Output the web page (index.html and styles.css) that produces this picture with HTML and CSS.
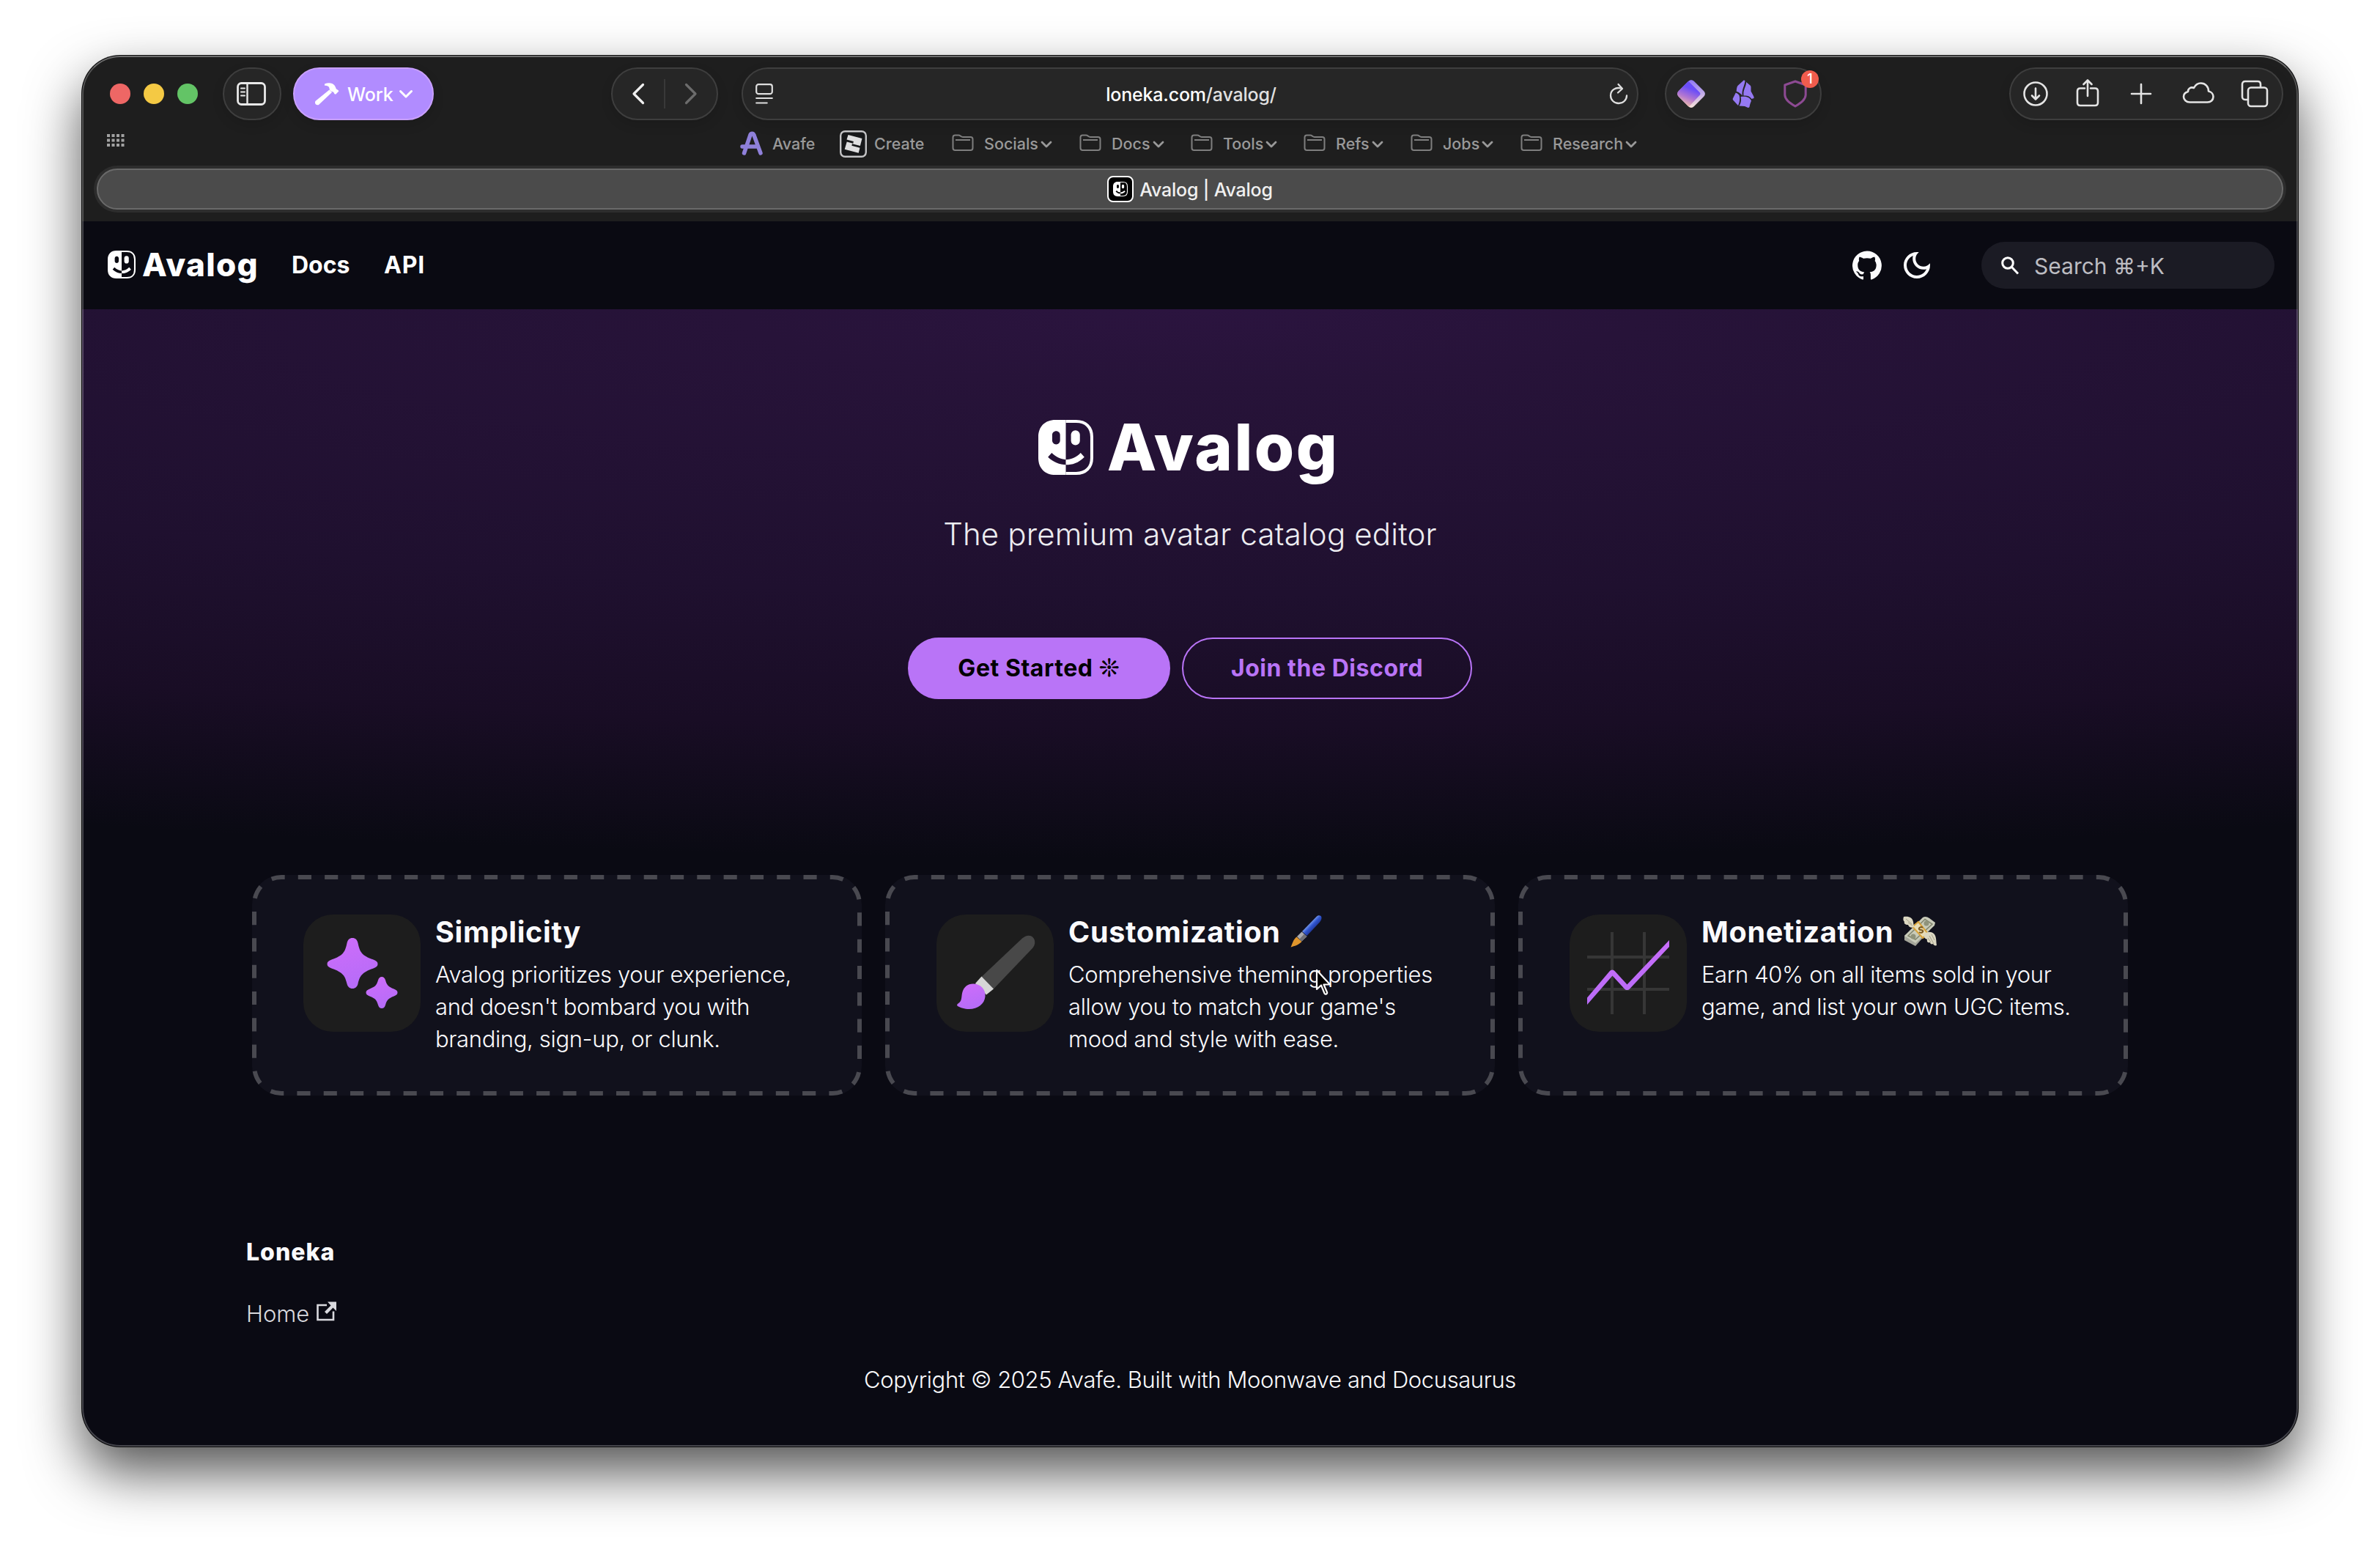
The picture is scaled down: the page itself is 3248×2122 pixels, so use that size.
FILE: index.html
```
<!DOCTYPE html>
<html lang="en">

<head>
  <meta charset="utf-8">
  <title>Avalog | Avalog</title>
  <link rel="stylesheet" href="styles.css">
</head>

<body>
  <!-- shared shapes -->
  <svg class="defs" width="0" height="0">
    <defs>
      <linearGradient id="purple" x1="0" y1="0" x2="0.3" y2="1">
        <stop offset="0" stop-color="#cf6dfa" />
        <stop offset="1" stop-color="#b76cf8" />
      </linearGradient>
      <linearGradient id="gem" x1="0.65" y1="0.1" x2="0.3" y2="1">
        <stop offset="0.2" stop-color="#6a4df8" />
        <stop offset="0.6" stop-color="#b377d0" />
        <stop offset="1" stop-color="#f6c6a4" />
      </linearGradient>
      <linearGradient id="gemEdge" x1="0.5" y1="0" x2="0.5" y2="1">
        <stop offset="0" stop-color="#8f78f5" />
        <stop offset="1" stop-color="#f7e2da" />
      </linearGradient>
      <linearGradient id="handle" x1="0" y1="0" x2="1" y2="1">
        <stop offset="0.35" stop-color="#8fb0f5" />
        <stop offset="0.5" stop-color="#2f55cf" />
        <stop offset="0.7" stop-color="#1b2a80" />
      </linearGradient>
    </defs>
    <symbol id="face" viewBox="0 0 74 74">
      <path fill="currentColor" fill-rule="evenodd" d="M37 0H23C9 0 0 9 0 23v28c0 14 9 23 23 23h14V60.500C29 60 20 57 13 50l5-5.500c6 5.500 12 8.500 19 9zM24 15c3 0 5.300 2.300 5.300 5.300v7.400c0 3-2.300 5.300-5.300 5.300s-5.300-2.300-5.300-5.300v-7.400c0-3 2.300-5.300 5.300-5.300z" />
      <path fill="none" stroke="currentColor" stroke-width="4" d="M37 2h14c13 0 21 8 21 21v28c0 13-8 21-21 21H37" />
      <rect fill="currentColor" x="44" y="14" width="12" height="20" rx="6" />
      <path fill="currentColor" d="M37 53.500c8 0 14-3 20-9l5 5.500c-8 8-16 10.500-25 10.500z" />
    </symbol>
    <symbol id="folder" viewBox="0 0 30 24">
      <path fill="none" stroke="currentColor" stroke-width="2" d="M1.500 19V4.500C1.500 2.500 2.500 1.500 4.500 1.500H9c1.500 0 2 .5 3 1.300 1 .8 1.600 1.200 3 1.200h10.500c2 0 3 1 3 3v12c0 2-1 3-3 3h-21c-2 0-3-1-3-3zM5 8h20" />
    </symbol>
    <symbol id="chevron" viewBox="0 0 16 12">
      <path fill="none" stroke="currentColor" stroke-width="2.800" stroke-linecap="round" stroke-linejoin="round" d="M2 3l6 6 6-6" />
    </symbol>
  </svg>

  <div class="window">
    <div class="chrome">
      <div class="toolbar">
        <div class="lights">
          <span class="light red"></span>
          <span class="light yellow"></span>
          <span class="light green"></span>
        </div>
        <div class="pill sidebar-btn">
          <svg width="40" height="32" viewBox="0 0 40 32" fill="none" stroke="#e9e9e9" stroke-width="2.800">
            <rect x="1.500" y="1.500" width="37" height="29" rx="5" />
            <path d="M14.500 1.500v29" stroke-width="2.400" />
            <path d="M6 8.500h5M6 13.500h5M6 18.500h5" stroke-width="2" stroke-linecap="round" />
          </svg>
        </div>
        <div class="pill work">
          <svg width="34" height="32" viewBox="0 0 34 32" fill="#fff">
            <path d="M20.500 10.500l3.500 3.500L6.500 30.500c-1.500 1.300-3.500 1-4.700-.3s-1.200-3.300.2-4.600z" />
            <path d="M14 2.500C19 .5 24.500.8 27.500 4.500c1.300 1.700 1.600 3.600 2.500 5 .8.900 1.800.8 2.500 1.600l.8 1.300-4.200 4.400-1.500-.6c-.9-.8-.7-1.800-1.500-2.500-1.200-1-2.800-.6-4-1.700-1.700-1.600-1.300-3.300-2.100-5C18.800 5 16.500 4.800 14 4.700z" />
          </svg>
          <span>Work</span>
          <svg width="20" height="13" viewBox="0 0 20 13" fill="none" stroke="#fff" stroke-width="3" stroke-linecap="round" stroke-linejoin="round">
            <path d="M2.500 2.500L10 10l7.500-7.500" />
          </svg>
        </div>
        <div class="pill history">
          <svg width="18" height="30" viewBox="0 0 18 30" fill="none" stroke="#f0f0f0" stroke-width="3.200" stroke-linecap="round" stroke-linejoin="round">
            <path d="M15.500 2.500L3 15l12.500 12.500" />
          </svg>
          <span class="divider"></span>
          <svg width="18" height="30" viewBox="0 0 18 30" fill="none" stroke="#6c6c6c" stroke-width="3.200" stroke-linecap="round" stroke-linejoin="round">
            <path d="M2.500 2.500L15 15 2.500 27.500" />
          </svg>
        </div>
        <div class="pill address">
          <svg width="24" height="28" viewBox="0 0 24 28" fill="none" stroke="#dedede" stroke-width="2.200" stroke-linecap="round">
            <rect x="1.200" y="1.200" width="21.600" height="13" rx="3" />
            <path d="M1.200 20h21.600M1.200 26.500h14.500" />
          </svg>
          <div class="url">loneka.com<span>/avalog/</span></div>
          <svg width="26" height="30" viewBox="0 0 26 30" fill="none" stroke="#dedede" stroke-width="2.300" stroke-linecap="round" stroke-linejoin="round">
            <path d="M16 7.500C9 5.500 2 10 2 17.300 2 23.500 7 28 13 28s11-4.500 11-10.500" />
            <path d="M12.500 2l5.500 6-6 5.500" />
          </svg>
        </div>
        <div class="pill extensions">
          <svg width="38" height="38" viewBox="0 0 38 38">
            <path fill="url(#gemEdge)" d="M15 2c2.500-2.500 5.500-2.500 8 0l13 13c2.500 2.500 2.500 5.500 0 8L23 36c-2.500 2.500-5.500 2.500-8 0L2 23c-2.500-2.500-2.500-5.500 0-8z" />
            <path fill="url(#gem)" d="M16 2.500L30.500 17c1.300 1.300 1.300 2.700 0 4L16 36.500c-.5 0-1-.5-1.500-1L2 23c-2.500-2.500-2.500-5.500 0-8L14.500 2.500c.5-.5 1-.5 1.500 0z" />
          </svg>
          <svg width="30" height="38" viewBox="0 0 30 38" fill="#9579f2">
            <path d="M16 .3L8 7.500C6.500 9 6 11 5.800 15.800 9.500 17 12 19 13.800 21.800 12.500 14 16.500 9 17.500 1.500zM19 3c.5 6-4.500 10-3.500 18.500 4.500-.5 8.500.5 11 4.500L29.500 25c.3-1 0-2-.5-3l-3.500-6.500V10c0-1-.5-2-1-2.500zM4.800 17.500L.8 25.500c-.3 1 0 1.500.5 2.200L8 35c2-4.500 3-9 1.500-14-1-1.500-2.500-2.700-4.700-3.500zM11.500 23c1.300 4.500.3 9-2 12.500l7.500.5 4 1.700c1.500.5 2.300 0 2.600-1.200.5-3.500 1.400-5 2.400-8-2.500-5.500-8-6.500-14.500-5.500z" />
          </svg>
          <div class="shield">
            <svg width="32" height="38" viewBox="0 0 32 38" fill="none" stroke="#8d4a93" stroke-width="3" stroke-linejoin="round">
              <path d="M16 2L1.800 7v13.500C2 27 8 31 16 36c8-5 14-9 14.200-15.500V7z" />
            </svg>
            <span class="badge">1</span>
          </div>
        </div>
        <div class="pill actions">
          <svg width="40" height="40" viewBox="0 0 40 40">
            <circle cx="20" cy="20" r="15.500" />
            <path d="M20 12.500v14.500M15 22.500l5 5 5-5" />
          </svg>
          <svg width="40" height="40" viewBox="0 0 40 40">
            <path d="M16 12.500h-6c-2.500 0-4 1.500-4 4v15.500c0 2.500 1.500 4 4 4h20c2.500 0 4-1.500 4-4V16.500c0-2.500-1.500-4-4-4h-6" />
            <path d="M20 23V2M14.500 7L20 1.500 25.500 7" />
          </svg>
          <svg width="40" height="40" viewBox="0 0 40 40">
            <path d="M20 7v26M7 20h26" />
          </svg>
          <svg width="44" height="40" viewBox="0 0 44 40">
            <path d="M10.500 31.500C5.500 31.500 2 28 2 24c0-3.500 2.500-6 6-7-.2-4 4-7 8-5 2-4 5.500-6.500 9.500-6.500 6 0 10.500 4.500 10.500 11 4 .8 6.500 4 6.500 7.500 0 4.500-3.500 7.500-8 7.500z" />
          </svg>
          <svg width="40" height="40" viewBox="0 0 40 40">
            <path d="M10.500 28H7c-2.500 0-4-1.500-4-4V7c0-2.500 1.500-4 4-4h17c2.500 0 4 1.500 4 4v3" />
            <rect x="11" y="11.500" width="26" height="25.500" rx="4" />
          </svg>
        </div>
      </div>

      <div class="bookmarks">
        <svg class="apps" width="24" height="18" viewBox="0 0 24 18" fill="#a2a2a2">
          <path d="M0 0h4v4H0zM6.500 0h4v4h-4zM13 0h4v4h-4zM19.500 0h4v4h-4zM0 6.500h4v4H0zM6.500 6.500h4v4h-4zM13 6.500h4v4h-4zM19.500 6.500h4v4h-4zM0 13h4v4H0zM6.500 13h4v4h-4zM13 13h4v4h-4zM19.500 13h4v4h-4z" />
        </svg>
        <div class="bookmark">
          <svg class="avafe" width="32" height="34" viewBox="0 0 32 34" fill="none" stroke="#8f80da" stroke-width="5.500" stroke-linecap="round" stroke-linejoin="round">
            <path d="M5.500 30L14 5c.8-2.500 4-2.500 4.800 0L28 30M3 21h19" />
          </svg>
          Avafe
        </div>
        <div class="bookmark">
          <svg class="create" width="37" height="37" viewBox="0 0 37 37">
            <rect x="1.200" y="1.200" width="34.600" height="34.600" rx="6" fill="#17181a" stroke="#c4c4c6" stroke-width="2.400" />
            <path fill="#dfdfe0" d="M11.500 6l19 5-2.600 10-10.900-2.800-.7 2.600 11.200 3-1.800 7-19-5 3-10.300 8.500 2.200.7-2.600-9.400-2.600z" />
          </svg>
          Create
        </div>
        <div class="bookmark"><svg class="folder"><use href="#folder" /></svg>Socials<svg class="chev"><use href="#chevron" /></svg></div>
        <div class="bookmark"><svg class="folder"><use href="#folder" /></svg>Docs<svg class="chev"><use href="#chevron" /></svg></div>
        <div class="bookmark"><svg class="folder"><use href="#folder" /></svg>Tools<svg class="chev"><use href="#chevron" /></svg></div>
        <div class="bookmark"><svg class="folder"><use href="#folder" /></svg>Refs<svg class="chev"><use href="#chevron" /></svg></div>
        <div class="bookmark"><svg class="folder"><use href="#folder" /></svg>Jobs<svg class="chev"><use href="#chevron" /></svg></div>
        <div class="bookmark"><svg class="folder"><use href="#folder" /></svg>Research<svg class="chev"><use href="#chevron" /></svg></div>
      </div>

      <div class="tabbar">
        <div class="tab">
          <span class="favicon"><svg width="20" height="20"><use href="#face" /></svg></span>
          <span class="tab-title">Avalog | Avalog</span>
        </div>
      </div>
    </div>

    <nav class="navbar">
      <svg class="brand-logo" width="38" height="38"><use href="#face" /></svg>
      <b class="brand">Avalog</b>
      <a class="nav-link docs">Docs</a>
      <a class="nav-link api">API</a>
      <svg class="github" width="40" height="40" viewBox="0 0 24 24" fill="#fafafc">
        <path d="M12 .3a12 12 0 0 0-3.800 23.380c.6.120.830-.260.830-.570L9 21.070c-3.340.720-4.040-1.610-4.040-1.610-.550-1.390-1.340-1.760-1.340-1.760-1.080-.740.090-.730.090-.730 1.200.090 1.830 1.240 1.830 1.240 1.080 1.830 2.810 1.300 3.500 1 .1-.780.420-1.310.760-1.610-2.670-.300-5.470-1.330-5.470-5.930 0-1.310.470-2.380 1.240-3.220-.140-.300-.540-1.520.100-3.180 0 0 1-.320 3.300 1.230a11.500 11.500 0 0 1 6 0c2.280-1.550 3.290-1.230 3.290-1.230.640 1.660.240 2.880.120 3.180a4.650 4.650 0 0 1 1.230 3.220c0 4.610-2.800 5.630-5.480 5.920.420.360.810 1.100.810 2.220l-.010 3.290c0 .310.200.690.820.570A12 12 0 0 0 12 .3" />
      </svg>
      <svg class="moon" width="48" height="48" viewBox="0 0 24 24" fill="#fafafc">
        <path d="M9.370 5.510c-.180.640-.270 1.310-.270 1.990 0 4.080 3.320 7.400 7.400 7.400.680 0 1.350-.090 1.990-.270C17.450 17.190 14.930 19 12 19c-3.860 0-7-3.140-7-7 0-2.930 1.810-5.450 4.370-6.490zM12 3c-4.970 0-9 4.030-9 9s4.030 9 9 9 9-4.030 9-9c0-.460-.040-.920-.100-1.360-.980 1.370-2.580 2.260-4.400 2.260-2.980 0-5.400-2.420-5.400-5.400 0-1.810.890-3.420 2.260-4.400-.440-.060-.900-.100-1.360-.100z" />
      </svg>
      <div class="search">
        <svg width="26" height="26" viewBox="0 0 26 26" fill="none" stroke="#fff" stroke-width="3">
          <circle cx="10" cy="10" r="7.300" />
          <path d="M15.500 15.500L24 24.500" />
        </svg>
        <span>Search ⌘+K</span>
      </div>
    </nav>

    <main class="page">
      <header class="hero">
        <h1><svg width="75" height="75"><use href="#face" /></svg><span>Avalog</span></h1>
        <p>The premium avatar catalog editor</p>
        <div class="buttons">
          <a class="button primary">Get Started <i>❊</i></a>
          <a class="button outline">Join the Discord</a>
        </div>
      </header>

      <section class="features">
        <div class="card">
          <svg class="dashes" width="832" height="301"><rect x="3" y="3" width="826" height="295" rx="37" /></svg>
          <svg class="tile" viewBox="0 0 160 160" fill="url(#purple)">
            <path d="M67 32c4 0 6.500 2.500 7.500 7 2.500 12 5 17 21 22.500 4 1.500 6 3 6 6s-2 4.500-6 6C79.500 79 77 84 74.500 94.500c-1 4-3.500 6.500-7.500 6.500s-6.500-2.500-7.500-6.500C57 84 54.500 79 38.500 73.500c-4-1.500-6-3-6-6s2-4.500 6-6C54.500 56 57 51 59.500 39c1-4.500 3.500-7 7.500-7z" />
            <path d="M107 85c2.500 0 4 1.500 5 4.500 2 7 4 9 11.500 12 3 1.200 5 2.500 5 5s-2 3.800-5 5c-7.500 3-9.500 5-11.500 12-1 3-2.500 4.500-5 4.500s-4-1.500-5-4.500c-2-7-4-9-11.500-12-3-1.200-5-2.500-5-5s2-3.800 5-5c7.500-3 9.500-5 11.500-12 1-3 2.500-4.500 5-4.500z" />
          </svg>
          <div>
            <h3>Simplicity</h3>
            <p>Avalog prioritizes your experience,<br>and doesn't bombard you with<br>branding, sign-up, or clunk.</p>
          </div>
        </div>

        <div class="card">
          <svg class="dashes" width="832" height="301"><rect x="3" y="3" width="826" height="295" rx="37" /></svg>
          <svg class="tile" viewBox="0 0 160 160">
            <path fill="#484848" d="M61.500 85L117 32.500c5-4.500 11-5 14.500-1.500s4 10-.5 15L78 101.500z" />
            <path fill="#d6d6d6" d="M61.500 84.500L78 101.500l-10 8L53 94z" />
            <path fill="url(#purple)" d="M50 94.500c10.500 0 17.500 8 16.500 17.500-1 10-10 17-22 17-6 0-12-2-15.500-4-1.500-1-1-2.500.5-3.500 6-3.500 4-9 6-16 2-6.500 7-11 14.500-11z" />
          </svg>
          <div>
            <h3>Customization
              <svg class="emoji" width="48" height="46" viewBox="0 0 48 46">
                <path fill="url(#handle)" d="M17 23L37 2.500c2.500-2.500 7-1.500 6.500 2.500-.3 2-1 3.500-2.500 5.500L23.500 29z" />
                <path fill="#a9a9ad" d="M16.500 23.500l7 6.500-7 6.500-6.500-6.500z" />
                <path fill="#6f6f75" d="M20 26.500l3.500 3.500-7 6.500-3-3z" />
                <path fill="#e0962c" d="M9.500 30.500l7 6.500c-4 4.500-10 6-15 7.500 2.500-5 3-10 8-14z" />
              </svg>
            </h3>
            <p>Comprehensive theming properties<br>allow you to match your game's<br>mood and style with ease.</p>
          </div>
        </div>

        <div class="card">
          <svg class="dashes" width="832" height="301"><rect x="3" y="3" width="826" height="295" rx="37" /></svg>
          <svg class="tile" viewBox="0 0 160 160">
            <path fill="none" stroke="#363636" stroke-width="4" d="M24 58h112M24 102h112M58 24v112M102 24v112" />
            <path fill="url(#purple)" d="M24 113.500l30.500-36c2-2.800 5.500-2.800 7.500 0l16.500 18L136 35v9L82 101.500c-2 2-5 2-7 0l-16.500-18L24 123z" />
          </svg>
          <div>
            <h3>Monetization
              <svg class="emoji money" width="48" height="42" viewBox="0 0 48 42">
                <path fill="#a5a69a" d="M3 33V27L32 3l12 9-26 29z" />
                <path fill="#c9cbb9" d="M3 27L28 2c3-2 6-1 9 1l8 6-1 4-26 24z" />
                <path fill="none" stroke="#82866f" stroke-width="1.500" d="M8 27L31 4.500 41 11 18 32z" />
                <circle fill="#8f937b" cx="33" cy="10" r="3.500" />
                <circle fill="#8f937b" cx="15" cy="28" r="3.500" />
                <path fill="#e8dcb4" stroke="#d9a43c" stroke-width="2" d="M14 14.500l8-6.500L35 24l-7 6z" />
                <path fill="#dcd8c2" d="M2 1c7-1 12 1 13 7l1 7c-4 2-7 0-8-3-4 0-6-2-5-4-2-2-2-4-1-7z" />
                <path fill="#dcd8c2" d="M30 25c4-4 9-4 13-1 4 4 3 10 4 16-2 1-4 0-5-2-2 1-4 0-4-2-3 1-5-1-4-4-3-1-5-3-4-7z" />
                <path fill="none" stroke="#a5a08a" stroke-width="1" d="M5 4l8 7M8 9l6 4M37 27l6 11M35 30l4 6M40 25l4 8" />
                <path fill="none" stroke="#7b5a22" stroke-width="2" d="M28 16c-2-2-6 0-5 2s4 0 5 2-2 4-5 2" />
              </svg>
            </h3>
            <p>Earn 40% on all items sold in your<br>game, and list your own UGC items.</p>
          </div>
        </div>
      </section>

      <footer class="footer">
        <b class="footer-title">Loneka</b>
        <a class="footer-link">Home
          <svg width="28" height="27" viewBox="0 0 28 27">
            <path fill="none" stroke="#d9d9de" stroke-width="2.600" d="M14 5H1.500v20H23V13.500" />
            <path fill="#d9d9de" d="M15 .5h12V13l-4.500-4.500-8.500 8.500-3-3L19.500 5.500z" />
          </svg>
        </a>
        <div class="copyright">Copyright © 2025 Avafe. Built with Moonwave and Docusaurus</div>
      </footer>
    </main>

    <!-- mouse pointer -->
    <svg class="cursor" width="24" height="37" viewBox="0 0 24 37">
      <path fill="#000" stroke="#fff" stroke-width="2.200" stroke-linejoin="round" d="M2 2v26l6-5.500 4.500 11c.5 1 1.500 1.500 2.500 1s1.500-1.500 1-2.500L11.500 21.500H20z" />
    </svg>
  </div>
</body>

</html>
```

FILE: styles.css
```
* {
  box-sizing: border-box;
}

body {
  margin: 0;
  height: 2122px;
  padding: 76px 112px 0;
  background: #fff;
  font-family: Inter, sans-serif;
  overflow: hidden;
}

svg {
  display: block;
  flex: none;
}

.defs {
  position: absolute;
}

.window {
  position: relative;
  width: 3024px;
  height: 1898px;
  border-radius: 52px;
  overflow: hidden;
  background: #0a0a13;
  box-shadow: 0 0 0 1px #0c0c0c, 0 35px 74px rgba(0, 0, 0, 0.68);
}

/* light rim on top of everything */
.window::after {
  content: "";
  position: absolute;
  inset: 0;
  border-radius: 52px;
  border: 2px solid rgba(255, 255, 255, 0.24);
  border-top-color: rgba(255, 255, 255, 0.35);
  pointer-events: none;
}

/* browser chrome */

.chrome {
  height: 226px;
  padding-top: 16px;
  background: #1e1e1e;
  color: #fff;
}

.toolbar {
  display: flex;
  align-items: center;
  height: 72px;
  padding-left: 38px;
}

.lights {
  display: flex;
  gap: 18px;
  margin-right: 34px;
}

.light {
  width: 28px;
  height: 28px;
  border-radius: 50%;
}

.red {
  background: #ee6765;
}

.yellow {
  background: #f4c944;
}

.green {
  background: #63c466;
}

.pill {
  display: flex;
  align-items: center;
  height: 72px;
  border: 2px solid #3e3e3e;
  border-radius: 36px;
  background: #262626;
  box-shadow: 0 6px 16px rgba(0, 0, 0, 0.12);
}

.sidebar-btn {
  width: 80px;
  padding-right: 2px;
  justify-content: center;
}

.work {
  width: 192px;
  margin-left: 16px;
  padding-left: 27px;
  border-color: #c9a0ff;
  background: #b18cff;
  font-size: 25px;
  font-weight: 500;
}

.work span {
  margin: 1px 7px 0 11px;
  letter-spacing: -0.1px;
}

.history {
  width: 146px;
  margin-left: 242px;
  padding: 0 26px;
  justify-content: space-between;
}

.divider {
  width: 2px;
  height: 40px;
  background: #393939;
}

.address {
  width: 1224px;
  margin-left: 32px;
  padding: 0 12px 0 17px;
  justify-content: space-between;
}

.url {
  margin-top: 1px;
  font-size: 25px;
  font-weight: 500;
  letter-spacing: -0.2px;
}

.url span {
  color: #e0e0e0;
}

.extensions {
  width: 214px;
  margin-left: 36px;
  padding-left: 15px;
}

.extensions svg + svg {
  margin: 0 40px 0 37px;
}

.shield {
  position: relative;
}

.badge {
  position: absolute;
  top: -13px;
  right: -16px;
  width: 24px;
  height: 24px;
  border-radius: 50%;
  background: #f05c4d;
  font-size: 18px;
  font-weight: 500;
  line-height: 24px;
  text-align: center;
}

.actions {
  display: grid;
  grid-template-columns: 71px 73px 76px 79px 40px;
  width: 374px;
  margin-left: 256px;
  padding-left: 14px;
}

.actions svg {
  fill: none;
  stroke: #e4e4e4;
  stroke-width: 2.6;
  stroke-linecap: round;
  stroke-linejoin: round;
}

.bookmarks {
  display: grid;
  grid-template-columns: 864px 136px 153px 174px 152px 154px 146px 150px auto;
  align-items: center;
  height: 62px;
  padding: 2px 0 0 34px;
  color: #999;
  font-size: 21.5px;
  font-weight: 500;
}

.bookmark {
  display: flex;
  align-items: center;
}

.apps {
  margin-bottom: 8px;
}

.avafe {
  margin-right: 12px;
}

.create {
  margin-right: 10px;
}

.folder {
  width: 30px;
  height: 24px;
  margin: 0 14px 2px 0;
  color: #7e7e7e;
}

.chev {
  width: 16px;
  height: 12px;
  margin: 2px 0 0 3px;
}

.tabbar {
  height: 64px;
  margin: 0 16px;
  padding: 4px;
  border-radius: 32px;
  background: #2d2d2d;
}

.tab {
  display: flex;
  align-items: center;
  justify-content: center;
  gap: 8px;
  height: 56px;
  border: 2px solid #6a6a6a;
  border-radius: 28px;
  background: #4b4b4b;
  color: #f0f0f0;
  font-size: 25px;
  font-weight: 500;
  letter-spacing: -0.2px;
}

.tab-title {
  margin-top: 1px;
}

.favicon {
  display: flex;
  align-items: center;
  justify-content: center;
  width: 36px;
  height: 36px;
  border: 2px solid #fff;
  border-radius: 8px;
  background: #000;
  color: #fff;
}

/* site navbar */

.navbar {
  display: flex;
  align-items: center;
  height: 120px;
  padding: 0 32px 2px 35px;
  background: #0a0a12;
  color: #fff;
}

.brand {
  width: 204px;
  margin-left: 9px;
  font-size: 44px;
  font-weight: 800;
  letter-spacing: 1.3px;
}

.nav-link {
  width: 126px;
  font-size: 32px;
  font-weight: 700;
}

.api {
  letter-spacing: 0.8px;
}

.github {
  margin: 2px 24px 0 auto;
}

.moon {
  margin: 2px 64px 0 0;
}

.search {
  display: flex;
  align-items: center;
  gap: 20px;
  width: 400px;
  height: 64px;
  margin-top: 2px;
  padding-left: 26px;
  border-radius: 32px;
  background: #1b1b24;
  color: #bdbdc2;
  font-size: 30px;
  font-weight: 400;
}

.search span {
  margin-top: 1px;
}

/* page */

.page {
  height: 1552px;
  color: #fafafc;
  background: radial-gradient(4400px 750px at 50% 0, #2b143f 0%, #271339 14%, #1f102f 52%, #190d25 76%, #0a0a13 100%);
}

.hero {
  display: flex;
  flex-direction: column;
  align-items: center;
  height: 772px;
  padding-top: 133px;
}

.hero h1 {
  display: flex;
  align-items: center;
  gap: 19px;
  margin: 0 4px 0 0;
  color: #fff;
  font-size: 88px;
  font-weight: 800;
  line-height: 110px;
  letter-spacing: 2.4px;
}

.hero p {
  margin: 31px 0 108px;
  color: #ececf0;
  font-size: 42px;
  font-weight: 330;
  line-height: 66px;
  letter-spacing: 0.15px;
}

.buttons {
  display: flex;
  gap: 16px;
}

.button {
  height: 84px;
  border: 2px solid #b974f7;
  border-radius: 42px;
  font-size: 32px;
  font-weight: 700;
  line-height: 79px;
  text-align: center;
  letter-spacing: 0.55px;
  color: #b974f7;
}

.button i {
  font-family: "DejaVu Sans", sans-serif;
  font-style: normal;
  font-weight: 400;
  font-size: 34px;
  line-height: 1;
}

.primary {
  width: 358px;
  background: #b974f7;
  color: #000;
}

.outline {
  width: 396px;
}

.features {
  display: grid;
  grid-template-columns: repeat(3, 832px);
  justify-content: center;
  gap: 32px;
}

.card {
  position: relative;
  display: flex;
  gap: 20px;
  height: 301px;
  padding: 54px 0 0 70px;
  border-radius: 40px;
  background: #11111c;
}

.dashes {
  position: absolute;
  top: 0;
  left: 0;
  fill: none;
  stroke: #494950;
  stroke-width: 6;
  stroke-dasharray: 18.15 18.15;
  stroke-dashoffset: -22.8;
}

.tile {
  width: 160px;
  height: 160px;
  border-radius: 40px;
  background: #1d1d1d;
}

.card h3 {
  display: flex;
  gap: 12px;
  margin: 0 0 12px;
  font-size: 39.5px;
  font-weight: 700;
  line-height: 48px;
  letter-spacing: 0.7px;
}

.card p {
  margin: 0;
  font-size: 31px;
  font-weight: 330;
  line-height: 44px;
  letter-spacing: -0.35px;
}

.money {
  margin-top: 2px;
}

.footer {
  display: flex;
  flex-direction: column;
  padding: 192px 224px 0;
  font-size: 31px;
  line-height: 44px;
}

.footer-title {
  font-size: 32px;
  font-weight: 800;
  letter-spacing: 1px;
}

.footer-link {
  display: flex;
  gap: 10px;
  margin: 40px 0 46px;
  color: #d9d9de;
  font-weight: 330;
}

.footer-link svg {
  margin-top: 5px;
}

.copyright {
  text-align: center;
  font-weight: 330;
  letter-spacing: -0.4px;
}

.cursor {
  position: absolute;
  top: 1246px;
  left: 1683px;
}
```
